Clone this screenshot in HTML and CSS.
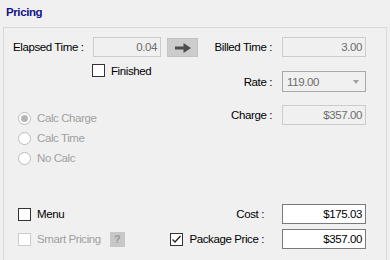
FILE: index.html
```html
<!DOCTYPE html>
<html>
<head>
<meta charset="utf-8">
<link rel="stylesheet" href="styles.css">
</head>
<body>
<div class="title">Pricing</div>
<div class="group">
  <div class="top">
    <div class="col-left">
      <div class="row">
        <span class="lbl-elapsed">Elapsed Time :</span>
        <div class="field dis w-el">0.04</div>
        <div class="arrow-btn">
          <svg width="16" height="10" viewBox="0 0 16 10"><path d="M0 3.5h8.5V0L16 5l-7.5 5V6.5H0z" fill="#4d4d4d"/></svg>
        </div>
      </div>
      <div class="check finished"><span class="box"></span><span>Finished</span></div>
      <div class="radios">
        <div class="radio"><span class="circle on"></span><span>Calc Charge</span></div>
        <div class="radio"><span class="circle"></span><span>Calc Time</span></div>
        <div class="radio"><span class="circle"></span><span>No Calc</span></div>
      </div>
    </div>
    <div class="col-right">
      <div class="row">
        <span class="rlbl">Billed Time :</span>
        <div class="field dis">3.00</div>
      </div>
      <div class="row rate">
        <span class="rlbl">Rate :</span>
        <div class="select"><span>119.00</span><span class="tri"></span></div>
      </div>
      <div class="row charge">
        <span class="rlbl">Charge :</span>
        <div class="field dis">$357.00</div>
      </div>
    </div>
  </div>
  <div class="bottom">
    <div class="brow">
      <div class="bleft">
        <div class="check"><span class="box"></span><span>Menu</span></div>
      </div>
      <div class="blbl"><span>Cost :</span></div>
      <div class="field">$175.03</div>
    </div>
    <div class="brow">
      <div class="bleft">
        <div class="check disabled"><span class="box"></span><span>Smart Pricing</span></div>
        <span class="help">?</span>
      </div>
      <div class="blbl">
        <div class="check"><span class="box">
          <svg width="11" height="11" viewBox="0 0 11 11"><path d="M1.5 5.5l2.5 2.5 5.5-6" fill="none" stroke="#222" stroke-width="1.3"/></svg>
        </span><span>Package Price :</span></div>
      </div>
      <div class="field">$357.00</div>
    </div>
  </div>
</div>
</body>
</html>
```
FILE: styles.css
```css
body {
  margin: 0;
  width: 390px;
  height: 260px;
  overflow: hidden;
  background: #f0f0f0;
  font-family: "Liberation Sans", Arial, sans-serif;
  font-size: 11.5px;
  letter-spacing: -0.4px;
  white-space: nowrap;
  color: #000;
}

.title {
  height: 27px;
  box-sizing: border-box;
  padding: 6px 0 0 6px;
  line-height: 13px;
  font-weight: bold;
  color: #14148c;
}

.group {
  margin: 0 3px;
  border: 1px solid #d9d9d9;
  border-bottom: 0;
  height: 240px;
}

.top {
  display: flex;
  height: 140px;
}

.col-left {
  width: 201px;
  padding-top: 9px;
}

.col-right {
  width: 161px;
  padding-top: 9px;
}

.row {
  display: flex;
  align-items: center;
  height: 20px;
}

.lbl-elapsed {
  margin-left: 9px;
  width: 80px;
}

.field {
  box-sizing: border-box;
  height: 20px;
  width: 84px;
  border: 1px solid #7a7a7a;
  background: #fff;
  text-align: right;
  padding-right: 3px;
  line-height: 18px;
}

.field.dis {
  border-color: #cccccc;
  background: #f0f0f0;
  color: #6d6d6d;
}

.w-el {
  width: 68px;
}

.arrow-btn {
  box-sizing: border-box;
  margin-left: 6px;
  width: 31px;
  height: 19px;
  align-self: flex-end;
  background: #cccccc;
  border: 1px solid #c2c2c2;
  display: flex;
  align-items: center;
  justify-content: center;
}

.check {
  display: flex;
  align-items: center;
  height: 13px;
}

.box {
  box-sizing: border-box;
  width: 13px;
  height: 13px;
  border: 1px solid #333;
  background: #fff;
  margin-right: 6px;
  display: flex;
  align-items: center;
  justify-content: center;
}

.check.disabled {
  color: #a0a0a0;
}

.check.disabled .box {
  border-color: #cccccc;
}

.finished {
  margin: 7px 0 0 88px;
}

.radios {
  margin-top: 31px;
}

.radio {
  display: flex;
  align-items: center;
  height: 20px;
  padding-left: 14px;
  color: #a0a0a0;
}

.circle {
  box-sizing: border-box;
  width: 13px;
  height: 13px;
  border: 1px solid #bcbcbc;
  border-radius: 50%;
  background: #fff;
  margin-right: 6px;
  display: flex;
  align-items: center;
  justify-content: center;
}

.circle.on::after {
  content: "";
  width: 7px;
  height: 7px;
  border-radius: 50%;
  background: #b4b4b4;
}

.rlbl {
  flex: 1;
  text-align: right;
  padding-right: 10px;
}

.rate {
  margin-top: 14px;
  height: 21px;
}

.charge {
  margin-top: 13px;
}

.select {
  box-sizing: border-box;
  width: 84px;
  height: 21px;
  border: 1px solid #a8a8a8;
  background: #f0f0f0;
  color: #6d6d6d;
  display: flex;
  align-items: center;
  justify-content: space-between;
  padding: 0 6px 0 4px;
}

.tri {
  width: 0;
  height: 0;
  border-left: 3.5px solid transparent;
  border-right: 3.5px solid transparent;
  border-top: 4px solid #a0a0a0;
}

.bottom {
  margin-top: 36px;
  display: flex;
  flex-direction: column;
  gap: 5px;
}

.brow {
  display: flex;
  align-items: center;
  height: 20px;
}

.bleft {
  width: 165px;
  box-sizing: border-box;
  padding-left: 14px;
  display: flex;
  align-items: center;
}

.blbl {
  flex: 1;
  display: flex;
  justify-content: flex-end;
  align-items: center;
  padding-right: 18px;
}

.brow .field {
  margin-right: 20px;
}

.help {
  margin-left: 9px;
  width: 15px;
  height: 15px;
  background: #c8c8c8;
  color: #9a9a9a;
  font-weight: bold;
  font-size: 11px;
  letter-spacing: 0;
  line-height: 15px;
  text-align: center;
}
```
